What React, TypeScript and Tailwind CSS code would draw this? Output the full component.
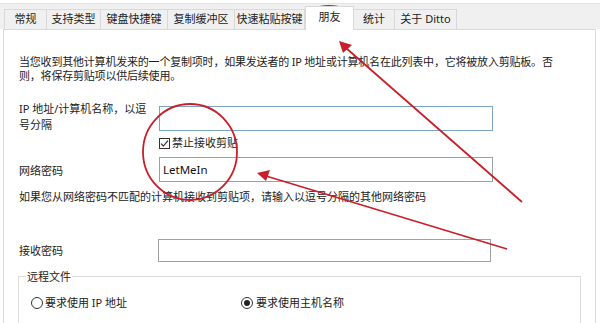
const tabs = [
  { label: "常规", w: "w-[43px]" },
  { label: "支持类型", w: "w-[54px]" },
  { label: "键盘快捷键", w: "w-[67px]" },
  { label: "复制缓冲区", w: "w-[67px]" },
  { label: "快速粘贴按键", w: "w-[70px]" },
  { label: "朋友", w: "w-[49px]", active: true },
  { label: "统计", w: "w-[41px]" },
  { label: "关于 Ditto", w: "w-[62px]" },
];

function Checkbox() {
  return (
    <span className="flex h-[11px] w-[11px] items-center justify-center border border-[#333] bg-white">
      <svg width="9" height="9" viewBox="0 0 9 9">
        <path d="M1 4.6 L3.4 7 L8 1.6" fill="none" stroke="#222" strokeWidth="1.1" />
      </svg>
    </span>
  );
}

function Radio({ checked }: { checked?: boolean }) {
  return (
    <span className="flex h-[12px] w-[12px] items-center justify-center rounded-full border border-[#333] bg-white">
      {checked && <span className="h-[6px] w-[6px] rounded-full bg-[#222]" />}
    </span>
  );
}

export default function App() {
  return (
    <div className="relative h-[323px] w-[600px] overflow-hidden bg-white font-['Noto_Sans','Noto_Sans_CJK_SC',sans-serif] text-[11px] text-[#222]">
      {/* Tab strip */}
      <div className="mt-[3px] flex h-[26px] items-end border-t border-[#e6e6e6] bg-[#f0f0f0] pl-[4px] pr-[4px]">
        {tabs.map((t) =>
          t.active ? (
            <div
              key={t.label}
              className={`${t.w} relative z-10 -mb-px flex h-[24px] items-center justify-center border border-b-0 border-[#d9d9d9] bg-white pb-[2px]`}
            >
              {t.label}
            </div>
          ) : (
            <div
              key={t.label}
              className={`${t.w} flex h-[20px] items-center justify-center border border-b-0 border-l-0 border-[#d9d9d9] bg-[#f0f0f0] first:border-l`}
            >
              {t.label}
            </div>
          )
        )}
      </div>

      {/* Panel */}
      <div className="ml-[3px] mr-[4px] h-[300px] border-x border-t border-[#d9d9d9] bg-white pl-[15px]">
        <div className="mt-[25px] whitespace-nowrap leading-[14px] tracking-[-0.2px]">
          <div>当您收到其他计算机发来的一个复制项时，如果发送者的 IP 地址或计算机名在此列表中，它将被放入剪贴板。否</div>
          <div>则，将保存剪贴项以供后续使用。</div>
        </div>

        <div className="mt-[18px] flex items-start">
          <div className="w-[140px] leading-[16px]">
            <div>IP 地址/计算机名称，以逗</div>
            <div>号分隔</div>
          </div>
          <div className="mt-[5px] h-[25px] w-[334px] border border-[#7aa3c4] bg-white" />
        </div>

        <div className="ml-[140px] mt-[4px] flex h-[12px] items-center gap-[2px]">
          <Checkbox />
          <span>禁止接收剪贴</span>
        </div>

        <div className="mt-[8px] flex items-center">
          <div className="w-[140px] pt-[3px]">网络密码</div>
          <div className="flex h-[25px] w-[334px] items-center border border-[#a0a0a0] bg-white pl-[3px] text-[11.5px] text-[#111]">
            LetMeIn
          </div>
        </div>

        <div className="mt-[8px] whitespace-nowrap leading-[13px]">
          如果您从网络密码不匹配的计算机接收到剪贴项，请输入以逗号分隔的其他网络密码
        </div>

        <div className="mt-[36px] flex items-center">
          <div className="w-[139px] pt-[2px]">接收密码</div>
          <div className="h-[23px] w-[333px] border border-[#a0a0a0] bg-white" />
        </div>

        <fieldset className="-ml-px mr-[14px] mt-[8px] h-[80px] border border-[#dcdcdc] pl-[7px]">
          <legend className="px-[1px] leading-[13px]">远程文件</legend>
          <div className="mt-[12px] flex items-center">
            <div className="flex w-[215px] items-center gap-[2px] pl-[5px]">
              <Radio />
              <span>要求使用 IP 地址</span>
            </div>
            <div className="flex items-center gap-[3px]">
              <Radio checked />
              <span>要求使用主机名称</span>
            </div>
          </div>
        </fieldset>
      </div>

      {/* Red annotations */}
      <svg className="pointer-events-none absolute left-0 top-0" width="600" height="323" viewBox="0 0 600 323">
        <g stroke="#c8202a" fill="none" strokeWidth="1.8">
          <ellipse cx="329" cy="17" rx="21" ry="11" />
          <ellipse cx="190" cy="152" rx="47" ry="48" />
          <line x1="522" y1="202" x2="346" y2="48" />
          <line x1="507" y1="249" x2="266" y2="176" />
        </g>
        <g fill="#c8202a">
          <polygon points="339,41 352,45 343,53" />
          <polygon points="257,173 270,170 266,181" />
        </g>
      </svg>
    </div>
  );
}
